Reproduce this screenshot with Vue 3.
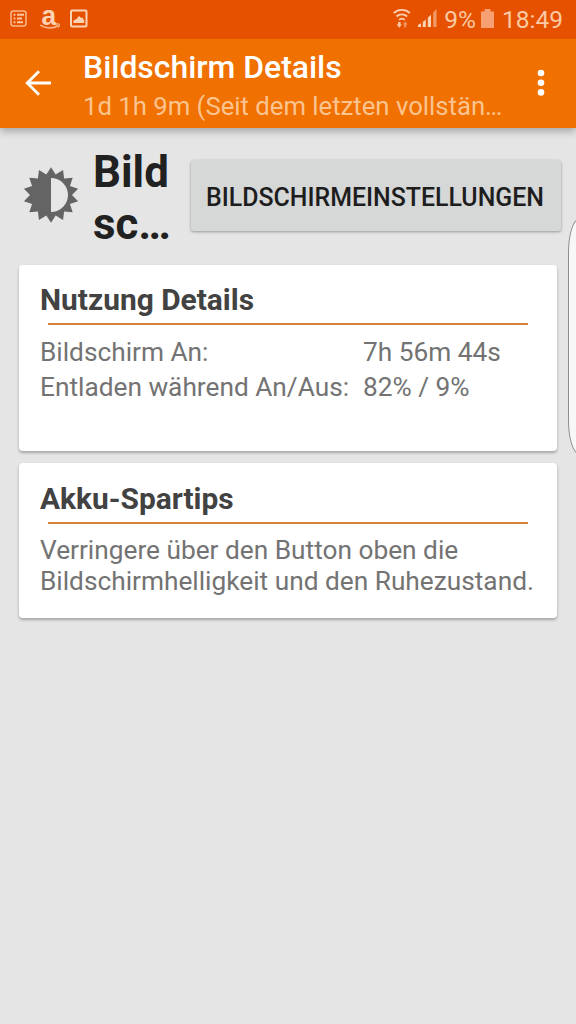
<template>
  <div class="screen">
    <header class="top">
      <div class="status-bar">
        <svg class="status-left" width="80" height="22" viewBox="0 0 80 22">
          <rect x="1" y="3" width="15" height="15" rx="2.5" fill="none" stroke="#fbb78b" stroke-width="1.5" />
          <path d="M3.6 6.8h1.8M7 6.8h7M3.6 10.5h1.8M7 10.5h5M3.6 14.2h1.8M7 14.2h6" stroke="#fbc7a2" stroke-width="1.9" />
          <path d="M30.3 17.200c5.500 3.600 13 3.600 18 .3" fill="none" stroke="#fbb78b" stroke-width="1.600" />
          <path d="M46 16.200c1.500-.4 2.600-.4 3.400 0 .2 1.200-.3 2.300-1.200 3.300" fill="none" stroke="#fbb78b" stroke-width="1.200" />
          <text class="shop-letter" x="0" y="0" transform="translate(31.500 16.800) scale(.94 1)">a</text>
          <rect x="61" y="2.500" width="15.500" height="16" rx="1" fill="none" stroke="#fbd3b4" stroke-width="2" />
          <path d="M63.500 15v-2.500l3-1.500 2.500-3 2.200 2 1-.8 2 3.300V15z" fill="#fbd3b4" />
        </svg>
        <div class="status-right">
          <svg width="46" height="22" viewBox="0 0 46 22">
            <g fill="none" stroke="#fbd3b4" stroke-width="1.900">
              <path d="M.8 5c4.500-4.200 11.500-4.200 16 0" />
              <path d="M3.500 8.500c3-2.900 7.600-2.900 10.600 0" />
              <path d="M6 11.900c1.800-1.600 3.900-1.600 5.700 0" />
            </g>
            <path d="M5 14h2.600v2.500h1.300l-2.600 3.200-2.600-3.200H5z" fill="#fbc7a2" />
            <path d="M11 19.500v-3H9.700l2.500-3 2.500 3h-1.500v3z" fill="#f4935a" />
            <path d="M25 19v-2l3-1.700V19zM29.800 19v-5l3-2.500V19zM34.800 19V9.800l3.200-3V19z" fill="#fbd3b4" />
            <path d="M40.200 19V4.500L43.500 1v18z" fill="#f29a66" />
          </svg>
          <span class="percent">9%</span>
          <svg class="battery" width="13" height="19" viewBox="0 0 13 19">
            <path d="M0 2.500h3.500V0h6v2.500H13V19H0z" fill="#f6a073" />
          </svg>
          <span class="clock">18:49</span>
        </div>
      </div>

      <div class="toolbar">
        <svg class="back" width="26" height="26" viewBox="0 0 26 26">
          <path d="M26 13H2M14 1.200L2.200 13 14 24.800" fill="none" stroke="#fff" stroke-width="2.800" />
        </svg>
        <div class="titles">
          <h1>Bildschirm Details</h1>
          <p>1d 1h 9m (Seit dem letzten vollstän…</p>
        </div>
        <svg class="menu" width="8" height="28" viewBox="0 0 8 28">
          <circle cx="4" cy="4" r="3.300" fill="#fff" />
          <circle cx="4" cy="13.700" r="3.300" fill="#fff" />
          <circle cx="4" cy="23.400" r="3.300" fill="#fff" />
        </svg>
      </div>
    </header>

    <main>
      <div class="app-row">
        <svg class="brightness" width="56" height="56" viewBox="-28 -28 56 56">
          <polygon :points="gearPoints" fill="#646464" />
          <path d="M0-17a17 17 0 0 1 0 34z" fill="#e6e6e6" />
        </svg>
        <div class="app-name">Bild<br />sc…</div>
        <button class="settings-btn">BILDSCHIRMEINSTELLUNGEN</button>
      </div>

      <section class="card usage">
        <h2>Nutzung Details</h2>
        <hr />
        <dl>
          <template v-for="row in usage" :key="row.label">
            <dt>{{ row.label }}</dt>
            <dd>{{ row.value }}</dd>
          </template>
        </dl>
      </section>

      <section class="card tips">
        <h2>Akku-Spartips</h2>
        <hr />
        <p>Verringere über den Button oben die<br />Bildschirmhelligkeit und den Ruhezustand.</p>
      </section>
    </main>

    <div class="edge-handle"></div>
  </div>
</template>

<script setup>
const usage = [
  { label: 'Bildschirm An:', value: '7h 56m 44s' },
  { label: 'Entladen während An/Aus:', value: '82% / 9%' }
]

// 14 teeth, first one pointing up
const teeth = 14
const gearPoints = Array.from({ length: teeth * 2 }, (_, i) => {
  const r = i % 2 ? 21 : 27.8
  const a = (i * Math.PI) / teeth
  return `${(r * Math.sin(a)).toFixed(2)},${(-r * Math.cos(a)).toFixed(2)}`
}).join(' ')
</script>

<style>
body {
  margin: 0;
  background: #e5e5e5;
}
</style>

<style scoped>
.screen {
  position: relative;
  width: 576px;
  height: 1024px;
  overflow: hidden;
  background: #e5e5e5;
  font-family: Roboto, sans-serif;
}

.top {
  height: 128px;
  background: #f07000;
  box-shadow: 0 3px 8px rgba(0, 0, 0, 0.3);
}

.status-bar {
  display: flex;
  justify-content: space-between;
  height: 39px;
  padding: 0 13px 0 10px;
  box-sizing: border-box;
  background: #e65100;
}

.status-left {
  margin-top: 8px;
  overflow: visible;
}

.shop-letter {
  fill: #fbd3b4;
  font-family: 'Liberation Sans', sans-serif;
  font-size: 28px;
  font-weight: 700;
}

.status-right {
  display: flex;
  align-items: flex-start;
  padding-top: 8px;
  color: #fbc9a5;
  font-size: 24.5px;
  line-height: 24px;
}

.percent {
  margin-left: 5px;
}

.battery {
  margin: 1px 8px 0 5px;
}

.toolbar {
  display: flex;
  height: 89px;
}

.back {
  margin: 31px 0 0 25px;
}

.titles {
  flex: 1;
  margin-left: 32px;
  padding-top: 9px;
  white-space: nowrap;
}

.titles h1 {
  margin: 0;
  color: #fff;
  font-size: 31.9px;
  font-weight: 500;
  line-height: 38px;
}

.titles p {
  margin: 5px 0 0;
  color: #fbc48f;
  font-size: 25.7px;
  line-height: 30px;
}

.menu {
  margin: 30px 31px 0 0;
}

.app-row {
  display: flex;
  height: 137px;
}

.brightness {
  margin: 39px 0 0 23px;
}

.app-name {
  width: 79px;
  height: 104px;
  margin: 18px 0 0 14px;
  color: #212121;
  font-size: 43.8px;
  font-weight: 700;
  line-height: 52px;
  white-space: nowrap;
}

.settings-btn {
  width: 370px;
  height: 71px;
  margin: 32px 0 0 19px;
  padding: 5px 2px 0 0;
  border: none;
  border-radius: 3px;
  background: #d6d7d7;
  box-shadow: 0 1px 3px rgba(0, 0, 0, 0.35);
  color: #1d1d1d;
  font-family: inherit;
  font-size: 24.9px;
  font-weight: 500;
  line-height: 30px;
  white-space: nowrap;
}

.card {
  box-sizing: border-box;
  width: 538px;
  margin: 0 0 12px 19px;
  padding: 17px 0 0 21px;
  border-radius: 4px;
  background: #fff;
  box-shadow: 0 2px 3px rgba(0, 0, 0, 0.28);
  color: #737373;
  font-size: 26.25px;
}

.usage {
  height: 186px;
}

.tips {
  height: 155px;
  padding-top: 18px;
}

.card h2 {
  margin: 0;
  color: #424242;
  font-size: 29.9px;
  font-weight: 700;
  line-height: 36px;
}

.card hr {
  width: 480px;
  height: 2px;
  margin: 5px 0 0 8px;
  border: none;
  background: #d5823a;
}

.card dl {
  display: grid;
  grid-template-columns: 323px auto;
  margin: 10px 0 0;
  line-height: 35px;
  white-space: nowrap;
}

.card dt,
.card dd {
  margin: 0;
}

.card p {
  margin: 11px 0 0;
  line-height: 31px;
  white-space: nowrap;
}

.edge-handle {
  position: absolute;
  top: 218px;
  left: 568px;
  width: 24px;
  height: 237px;
  box-sizing: border-box;
  border: 1px solid #8c8c8c;
  border-radius: 12px / 34px;
  background: #f7f7f7;
}
</style>
